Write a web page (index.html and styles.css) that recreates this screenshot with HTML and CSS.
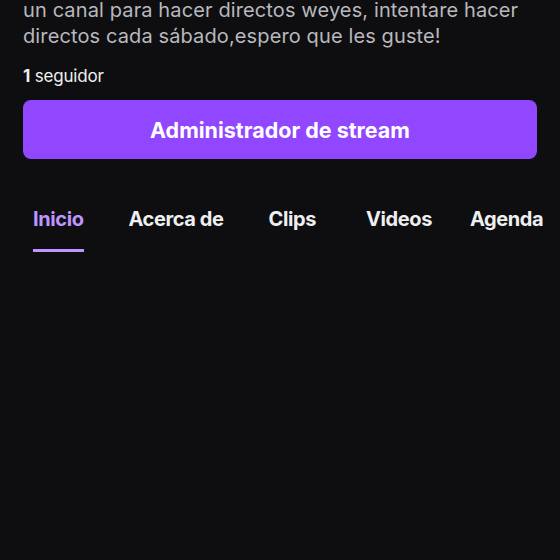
FILE: index.html
```html
<!DOCTYPE html>
<html>
<head>
  <title>Canal</title>
  <link rel="stylesheet" href="styles.css">
</head>
<body>
  <div class="channel-about">
    <p class="description">un canal para hacer directos weyes, intentare hacer directos cada sábado,espero que les guste!</p>
    <div class="followers"><b>1</b> seguidor</div>
    <button class="manager-button">Administrador de stream</button>
  </div>

  <nav class="tabs">
    <a class="tab active" href="#">Inicio</a>
    <a class="tab" href="#">Acerca de</a>
    <a class="tab" href="#">Clips</a>
    <a class="tab" href="#">Videos</a>
    <a class="tab" href="#">Agenda</a>
  </nav>
</body>
</html>
```

FILE: styles.css
```css
body {
  font-family: Inter, "Noto Sans", sans-serif;
  background-color: #0e0e10;
  color: #efeff1;
  margin: 0;
  padding: 0;
}

.channel-about {
  padding: 0 23px;
}

.description {
  margin: -3px 0 0;
  font-family: Inter, sans-serif;
  font-size: 20px;
  line-height: 26px;
  letter-spacing: 0.12px;
  color: #b8b8be;
  padding-right: 10px;
}

.followers {
  margin-top: 17px;
  font-size: 17px;
  line-height: 20px;
  letter-spacing: -0.2px;
  color: #efeff1;
}

.followers b {
  font-weight: 700;
}

.manager-button {
  display: block;
  width: 100%;
  height: 59px;
  margin-top: 14px;
  border: none;
  border-radius: 8px;
  background-color: #9147ff;
  color: #fff;
  font-family: Inter, sans-serif;
  font-size: 21.5px;
  font-weight: 700;
  cursor: pointer;
}

.tabs {
  display: flex;
  padding: 0 0 0 33px;
  margin-top: 48px;
  white-space: nowrap;
}

.tab {
  flex-shrink: 0;
  color: #efeff1;
  text-decoration: none;
  font-size: 20px;
  font-weight: 700;
  letter-spacing: -0.4px;
  padding-bottom: 18px;
  border-bottom: 3px solid transparent;
  margin-right: 45px;
}

.tab:nth-child(3) {
  margin-right: 50px;
}

.tab:nth-child(4) {
  margin-right: 38px;
}

.tab:last-child {
  margin-right: 0;
}

.tab.active {
  color: #bf94ff;
  border-bottom-color: #bf94ff;
}
```
